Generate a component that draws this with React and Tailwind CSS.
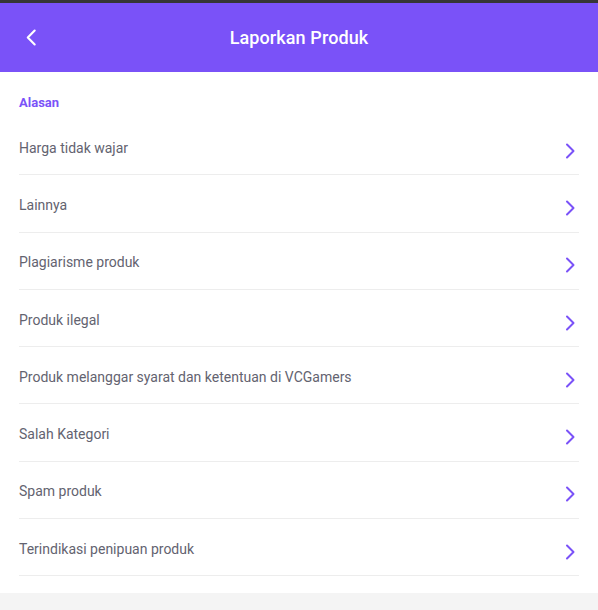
import React from 'react';

const reasons = [
  'Harga tidak wajar',
  'Lainnya',
  'Plagiarisme produk',
  'Produk ilegal',
  'Produk melanggar syarat dan ketentuan di VCGamers',
  'Salah Kategori',
  'Spam produk',
  'Terindikasi penipuan produk',
];

const Chevron = ({ dir = 'right', className }) => (
  <svg viewBox="0 0 10 16" className={className} fill="none" stroke="currentColor" strokeWidth="2" strokeLinecap="round" strokeLinejoin="round">
    {dir === 'right' ? <path d="M2 1.5 L8.5 8 L2 14.5" /> : <path d="M8 1.5 L1.5 8 L8 14.5" />}
  </svg>
);

const App = () => {
  return (
    <div className="min-h-[610px] bg-[#f4f4f4] font-['Roboto',sans-serif]">
      <div className="h-[3px] bg-[#363636]" />
      {/* Header */}
      <div className="h-[69px] bg-[#7a52f8] flex items-center relative">
        <button className="absolute left-[26px] top-[26px] text-white">
          <Chevron dir="left" className="w-[11px] h-[17px]" />
        </button>
        <h1 className="w-full text-center text-white text-[18px] font-medium tracking-[0.1px]">Laporkan Produk</h1>
      </div>

      {/* Reasons */}
      <div className="bg-white px-[19px] pt-[21px] pb-[17px]">
        <p className="text-[13px] font-bold text-[#7a52f8] leading-[20px]">Alasan</p>
        <div className="mt-[5px]">
          {reasons.map((r) => (
            <div key={r} className="h-[57.3px] flex items-center justify-between border-b border-[#ededed]">
              <span className="text-[14px] text-[#636370] mt-[4px]">{r}</span>
              <Chevron className="w-[10px] h-[16px] text-[#7a52f8] mr-[4px] mt-[9px]" />
            </div>
          ))}
        </div>
      </div>
    </div>
  );
};

export default App;
